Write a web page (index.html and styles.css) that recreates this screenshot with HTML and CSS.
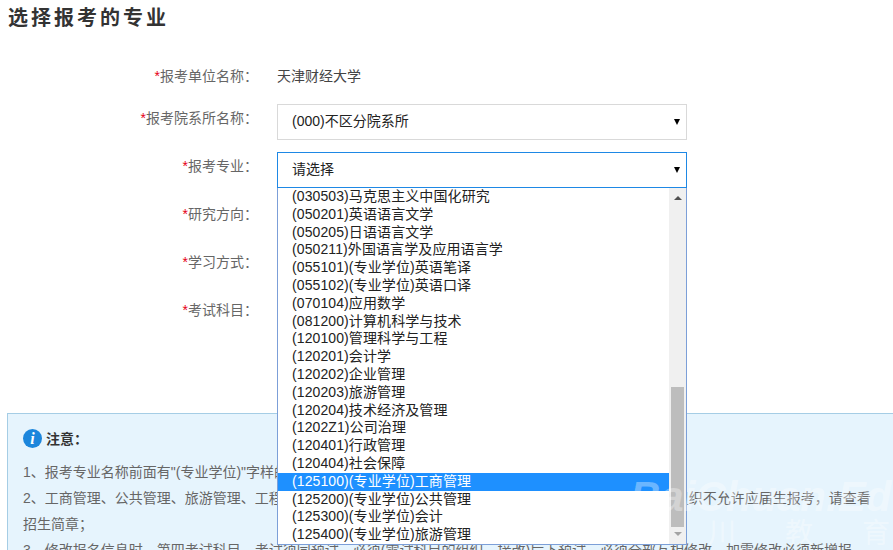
FILE: index.html
```html
<!DOCTYPE html>
<html lang="en">

<head>
  <meta charset="UTF-8" />
  <meta name="viewport" content="width=device-width, initial-scale=1.0" />
  <title>选择报考的专业</title>
  <link rel="stylesheet" href="styles.css">
</head>

<body>
  <h1 class="title">选择报考的专业</h1>

  <div class="form">
    <div class="row row-static">
      <label class="label"><i>*</i>报考单位名称&#65306;</label>
      <div class="value">天津财经大学</div>
    </div>
    <div class="row">
      <label class="label"><i>*</i>报考院系所名称&#65306;</label>
      <div class="select">(000)不区分院系所<span class="caret"></span></div>
    </div>
    <div class="row">
      <label class="label"><i>*</i>报考专业&#65306;</label>
      <div class="select-wrap">
        <div class="select select-open">请选择<span class="caret"></span></div>
        <div class="dropdown">
          <ul class="options">
            <li>(030503)马克思主义中国化研究</li>
            <li>(050201)英语语言文学</li>
            <li>(050205)日语语言文学</li>
            <li>(050211)外国语言学及应用语言学</li>
            <li>(055101)(专业学位)英语笔译</li>
            <li>(055102)(专业学位)英语口译</li>
            <li>(070104)应用数学</li>
            <li>(081200)计算机科学与技术</li>
            <li>(120100)管理科学与工程</li>
            <li>(120201)会计学</li>
            <li>(120202)企业管理</li>
            <li>(120203)旅游管理</li>
            <li>(120204)技术经济及管理</li>
            <li>(1202Z1)公司治理</li>
            <li>(120401)行政管理</li>
            <li>(120404)社会保障</li>
            <li class="active">(125100)(专业学位)工商管理</li>
            <li>(125200)(专业学位)公共管理</li>
            <li>(125300)(专业学位)会计</li>
            <li>(125400)(专业学位)旅游管理</li>
          </ul>
          <div class="scrollbar">
            <span class="arrow arrow-up"></span>
            <div class="track"><div class="thumb"></div></div>
            <span class="arrow arrow-down"></span>
          </div>
        </div>
      </div>
    </div>
    <div class="row">
      <label class="label"><i>*</i>研究方向&#65306;</label>
      <div class="select"></div>
    </div>
    <div class="row">
      <label class="label"><i>*</i>学习方式&#65306;</label>
      <div class="select"></div>
    </div>
    <div class="row">
      <label class="label"><i>*</i>考试科目&#65306;</label>
      <div class="select"></div>
    </div>
  </div>

  <div class="notice">
    <div class="notice-head">
      <span class="info-icon">i</span>
      <b>注意&#65306;</b>
    </div>
    <p>1、报考专业名称前面有"(专业学位)"字样的为专业学位硕士&#65292;否则为学术学位硕士&#65307;</p>
    <p>2、工商管理、公共管理、旅游管理、工程管理、物流工程、会计、图书情报、审计专业学位硕士招生单位组织不允许应届生报考&#65292;请查看招生简章&#65307;</p>
    <p>3、修改报名信息时&#65292;第四考试科目、考试须同预试&#65292;必须(需试科目的组织、接改)后下预试&#65292;必须全部互相修改&#65292;加需修改必须新增报</p>
  </div>

  <div class="watermark">
    <div class="wm-latin">BaiChuan.Edu</div>
    <div class="wm-cjk"><span>川</span><span>教</span><span>育</span></div>
  </div>
</body>

</html>
```

FILE: styles.css
```css
html,
body {
  height: 550px;
  overflow: hidden;
}

body {
  margin: 0;
  position: relative;
  font-family: "Liberation Sans", "Noto Sans CJK SC", sans-serif;
  font-size: 14px;
  color: #333;
  background: #fff;
}

.title {
  margin: 0;
  padding: 5px 0 0 8px;
  height: 56px;
  box-sizing: border-box;
  font-family: "Noto Sans CJK SC", serif;
  font-size: 20px;
  line-height: 24px;
  letter-spacing: 3px;
  font-weight: 700;
  color: #333;
}

.form {
  display: flex;
  flex-direction: column;
  gap: 12px;
}

.row {
  display: flex;
  height: 36px;
}

.label {
  width: 258px;
  text-align: right;
  line-height: 28px;
  color: #666;
  flex-shrink: 0;
}

.label i {
  color: #e60012;
  font-style: normal;
}

.value {
  margin-left: 19px;
  line-height: 40px;
  color: #444;
}

.row-static .label {
  line-height: 40px;
}

.select-wrap {
  position: relative;
  margin-left: 19px;
  width: 410px;
  height: 36px;
}

.select {
  position: relative;
  width: 410px;
  height: 36px;
  margin-left: 19px;
  box-sizing: border-box;
  border: 1px solid #d9d9d9;
  padding-left: 14px;
  line-height: 32px;
  color: #222;
  background: #fff;
}

.select-wrap .select {
  margin-left: 0;
}

.select-open {
  border-color: #1e88e5;
}

.caret {
  position: absolute;
  right: 6px;
  top: 14px;
  border-left: 3px solid transparent;
  border-right: 3px solid transparent;
  border-top: 6px solid #000;
}

.dropdown {
  position: absolute;
  z-index: 2;
  left: 0;
  top: 36px;
  width: 410px;
  height: 357px;
  box-sizing: border-box;
  border: 1px solid #7c9fd8;
  border-top: 0;
  background: #fff;
  display: flex;
  overflow: hidden;
}

.options {
  list-style: none;
  margin: 0;
  padding: 0;
  flex: 1;
  color: #222;
  letter-spacing: 0.1px;
}

.options li {
  height: 17.8px;
  line-height: 17.8px;
  padding-left: 14px;
  white-space: nowrap;
}

.options .active {
  background: #1e90ff;
  color: #fff;
}

.scrollbar {
  width: 17px;
  background: #f0f0f0;
  display: flex;
  flex-direction: column;
  align-items: center;
  flex-shrink: 0;
}

.arrow {
  display: block;
  border-left: 4px solid transparent;
  border-right: 4px solid transparent;
}

.arrow-up {
  margin-top: 8px;
  border-bottom: 4px solid #505050;
}

.arrow-down {
  margin: 5px 0 8px;
  border-top: 4px solid #a3a3a3;
}

.track {
  flex: 1;
  width: 13px;
  display: flex;
  flex-direction: column;
  justify-content: flex-end;
}

.thumb {
  height: 140px;
  background: #bdbdbd;
}

.notice {
  margin: 81px 0 0 7px;
  padding: 12px 16px 0 15px;
  width: 886px;
  height: 137px;
  box-sizing: border-box;
  border: 1px solid #a5cde5;
  border-right: 0;
  border-bottom: 0;
  background: #e6f4fd;
  color: #666;
  overflow: hidden;
}

.notice-head {
  display: flex;
  align-items: center;
  gap: 4px;
  height: 24px;
  margin-bottom: 9px;
  color: #333;
}

.info-icon {
  width: 19px;
  height: 19px;
  border-radius: 50%;
  background: #1c86dc;
  color: #fff;
  font-family: "Liberation Serif", serif;
  font-style: italic;
  font-weight: 700;
  font-size: 16px;
  line-height: 19px;
  text-align: center;
}

.notice p {
  margin: 0;
  line-height: 26px;
}

.watermark {
  position: absolute;
  z-index: 3;
  left: 630px;
  top: 476px;
  width: 263px;
  height: 74px;
  overflow: hidden;
  color: rgba(255, 255, 255, 0.35);
  pointer-events: none;
}

.wm-latin {
  font-family: "Liberation Sans", sans-serif;
  font-style: italic;
  font-weight: 700;
  font-size: 42px;
  line-height: 42px;
  white-space: nowrap;
}

.wm-cjk {
  display: flex;
  gap: 49px;
  padding-left: 78px;
  font-size: 28px;
  line-height: 32px;
}
```
